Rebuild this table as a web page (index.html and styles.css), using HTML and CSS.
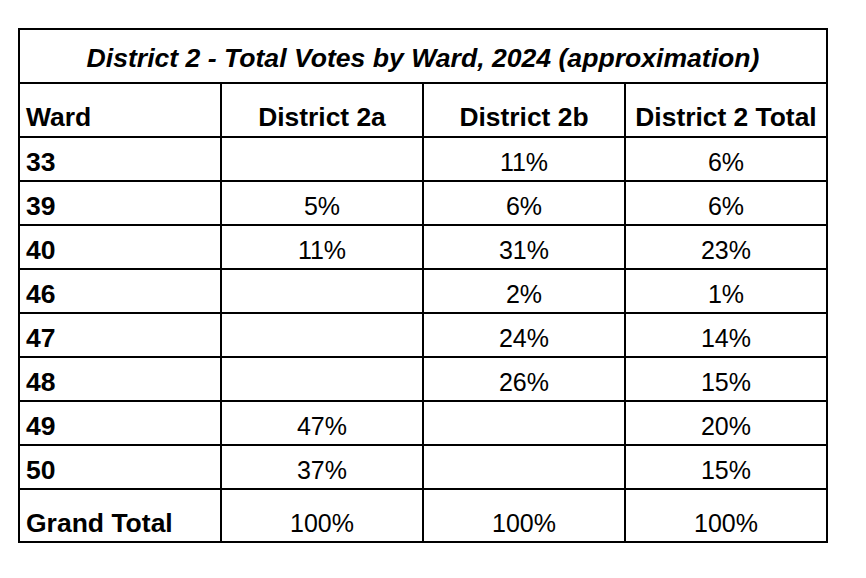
FILE: index.html
```html
<!DOCTYPE html>
<html>
<head>
<meta charset="utf-8">
<link rel="stylesheet" href="styles.css">
</head>
<body>
<div class="page">
  <div class="sheet">
    <div class="cell title">District 2 - Total Votes by Ward, 2024 (approximation)</div>
    <div class="cell head label">Ward</div>
    <div class="cell head">District 2a</div>
    <div class="cell head">District 2b</div>
    <div class="cell head">District 2 Total</div>

    <div class="cell label row">33</div><div class="cell row"></div><div class="cell row">11%</div><div class="cell row">6%</div>
    <div class="cell label row">39</div><div class="cell row">5%</div><div class="cell row">6%</div><div class="cell row">6%</div>
    <div class="cell label row">40</div><div class="cell row">11%</div><div class="cell row">31%</div><div class="cell row">23%</div>
    <div class="cell label row">46</div><div class="cell row"></div><div class="cell row">2%</div><div class="cell row">1%</div>
    <div class="cell label row">47</div><div class="cell row"></div><div class="cell row">24%</div><div class="cell row">14%</div>
    <div class="cell label row">48</div><div class="cell row"></div><div class="cell row">26%</div><div class="cell row">15%</div>
    <div class="cell label row">49</div><div class="cell row">47%</div><div class="cell row"></div><div class="cell row">20%</div>
    <div class="cell label row">50</div><div class="cell row">37%</div><div class="cell row"></div><div class="cell row">15%</div>

    <div class="cell label total">Grand Total</div><div class="cell total">100%</div><div class="cell total">100%</div><div class="cell total">100%</div>
  </div>
</div>
</body>
</html>
```

FILE: styles.css
```css
html, body {
  margin: 0;
  padding: 0;
  background: #ffffff;
}

.page {
  padding: 28px 0 0 18px;
}

.sheet {
  display: grid;
  grid-template-columns: 200px 200px 200px 200px;
  grid-template-rows: 52px 52px repeat(8, 42px) 51px;
  gap: 2px;
  padding: 2px;
  width: 806px;
  background: #000000;
  font-family: "Liberation Sans", Arial, sans-serif;
  font-size: 25px;
  line-height: 28px;
  color: #000000;
}

.cell {
  background: #ffffff;
  display: flex;
  align-items: flex-end;
  justify-content: center;
  padding: 0 6px 4px 6px;
  white-space: nowrap;
  overflow: hidden;
}

.title {
  grid-column: 1 / 5;
  font-weight: bold;
  font-style: italic;
  font-size: 26.6px;
  padding-bottom: 10px;
}

.head {
  font-weight: bold;
  font-size: 26.4px;
  padding-bottom: 5px;
}

.label {
  justify-content: flex-start;
  font-weight: bold;
  font-size: 26.5px;
}
```
